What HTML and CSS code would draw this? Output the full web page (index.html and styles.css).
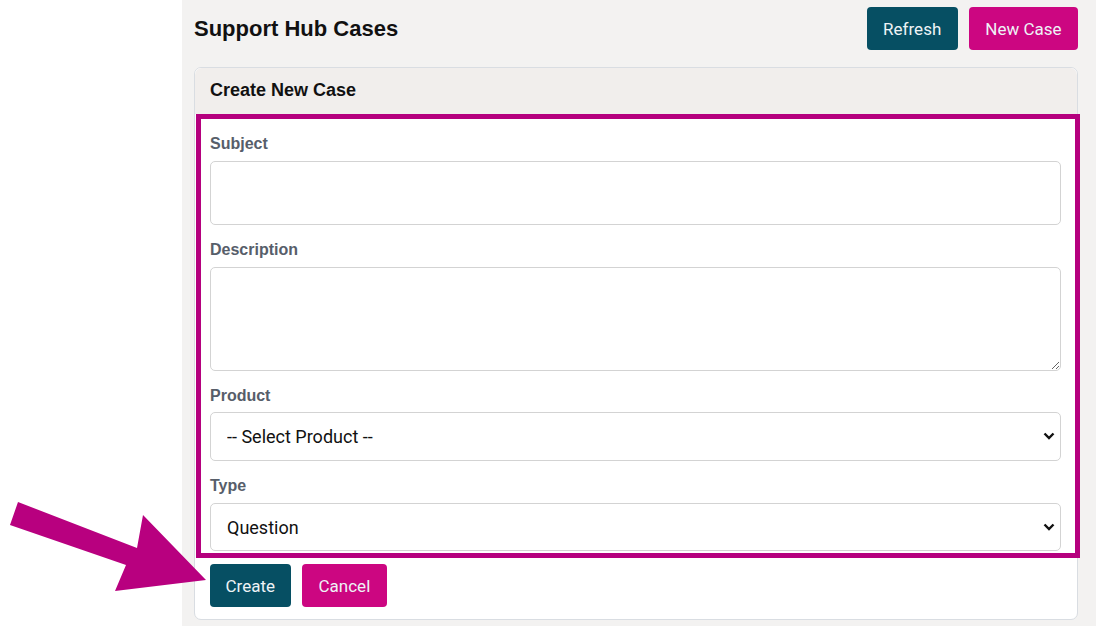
FILE: index.html
```html
<!DOCTYPE html>
<html>
<head>
<meta charset="utf-8">
<link rel="stylesheet" href="styles.css">
</head>
<body>
<div class="layout">
  <aside class="sidebar"></aside>
  <main class="main">
    <div class="topbar">
      <h1 class="page-title">Support Hub Cases</h1>
      <div class="actions">
        <button class="btn btn-teal">Refresh</button>
        <button class="btn btn-pink">New Case</button>
      </div>
    </div>
    <section class="card">
      <div class="card-header">Create New Case</div>
      <div class="card-body">
        <div class="field">
          <label class="label">Subject</label>
          <input class="control control-subject" type="text">
        </div>
        <div class="field">
          <label class="label">Description</label>
          <textarea class="control control-desc"></textarea>
        </div>
        <div class="field field-select">
          <label class="label">Product</label>
          <div class="select-wrap">
            <select class="control control-select">
              <option>-- Select Product --</option>
            </select>
            <svg class="chev" width="12" height="8" viewBox="0 0 12 8"><path d="M1.5 1.5 L6 6 L10.5 1.5" fill="none" stroke="#111" stroke-width="2.4"/></svg>
          </div>
        </div>
        <div class="field field-select field-type">
          <label class="label">Type</label>
          <div class="select-wrap">
            <select class="control control-select">
              <option>Question</option>
            </select>
            <svg class="chev" width="12" height="8" viewBox="0 0 12 8"><path d="M1.5 1.5 L6 6 L10.5 1.5" fill="none" stroke="#111" stroke-width="2.4"/></svg>
          </div>
        </div>
        <div class="form-actions">
          <button class="btn btn-teal btn-create">Create</button>
          <button class="btn btn-pink btn-cancel">Cancel</button>
        </div>
        <div class="highlight"></div>
      </div>
    </section>
  </main>
</div>
<svg class="arrow" width="220" height="110" viewBox="0 490 220 110">
  <polygon points="18,502 137,548 143,515 206,580 115,591 126,565 10,525" fill="#b8007f"/>
</svg>
</body>
</html>
```
FILE: styles.css
```css
html, body {
  margin: 0;
  padding: 0;
  background: #ffffff;
  height: 100%;
  overflow: hidden;
}
body {
  font-family: "Liberation Sans", Arial, sans-serif;
  position: relative;
}
.layout {
  display: flex;
  height: 626px;
}
.sidebar {
  width: 182px;
  flex: none;
  background: #ffffff;
}
.main {
  flex: 1;
  background: #f3f2f1;
  padding: 7px 18px 0 12px;
}
.topbar {
  display: flex;
  align-items: center;
  justify-content: space-between;
  height: 43px;
}
.page-title {
  margin: 0;
  font-size: 22px;
  font-weight: bold;
  color: #111;
}
.actions {
  display: flex;
  gap: 11px;
}
.btn {
  border: none;
  border-radius: 4px;
  height: 43px;
  font-family: Roboto, "Liberation Sans", sans-serif;
  font-size: 17px;
  color: #eef3f6;
  padding: 0 16.5px;
  cursor: pointer;
}
.btn-teal { background: #064f63; }
.btn-pink { background: #cc0681; }
.card {
  margin-top: 17px;
  background: #ffffff;
  border: 1px solid #d9dde2;
  border-radius: 7px;
}
.card-header {
  background: #f1eeec;
  border-radius: 7px 7px 0 0;
  height: 46px;
  box-sizing: border-box;
  padding: 12px 15px 0;
  font-size: 18px;
  font-weight: bold;
  color: #111;
}
.card-body {
  position: relative;
  padding: 19px 16px 12px 15px;
}
.field {
  display: flex;
  flex-direction: column;
  margin-bottom: 14px;
}
.label {
  font-size: 16px;
  line-height: 21px;
  font-weight: bold;
  color: #575e6a;
  margin-bottom: 7px;
}
.field-select .label {
  margin-bottom: 6px;
}
.field-type .label {
  margin-bottom: 7px;
}
.control {
  box-sizing: border-box;
  width: 100%;
  border: 1px solid #d3d3d3;
  border-radius: 5px;
  background: #fff;
  font-family: Roboto, "Liberation Sans", sans-serif;
  font-size: 18px;
  color: #111;
  margin: 0;
}
.control-subject { height: 64px; padding: 0 16px; }
.control-desc { height: 104px; padding: 10px 16px; resize: vertical; display: block; }
.select-wrap {
  position: relative;
}
.control-select {
  height: 49px;
  padding: 0 40px 0 16px;
  appearance: none;
  -webkit-appearance: none;
  display: block;
}
.field-type .control-select {
  height: 48px;
}
.chev {
  position: absolute;
  right: 6px;
  top: 20px;
  pointer-events: none;
}
.form-actions {
  display: flex;
  gap: 11px;
  margin-top: -1px;
}
.btn-create { padding: 0 15.5px; }
.btn-cancel { padding: 0 17px; }
.highlight {
  position: absolute;
  left: 1px;
  top: 0;
  width: 884px;
  height: 444px;
  box-sizing: border-box;
  border: 5px solid #b5007e;
  pointer-events: none;
}
.arrow {
  position: absolute;
  left: 0;
  top: 490px;
}
```
